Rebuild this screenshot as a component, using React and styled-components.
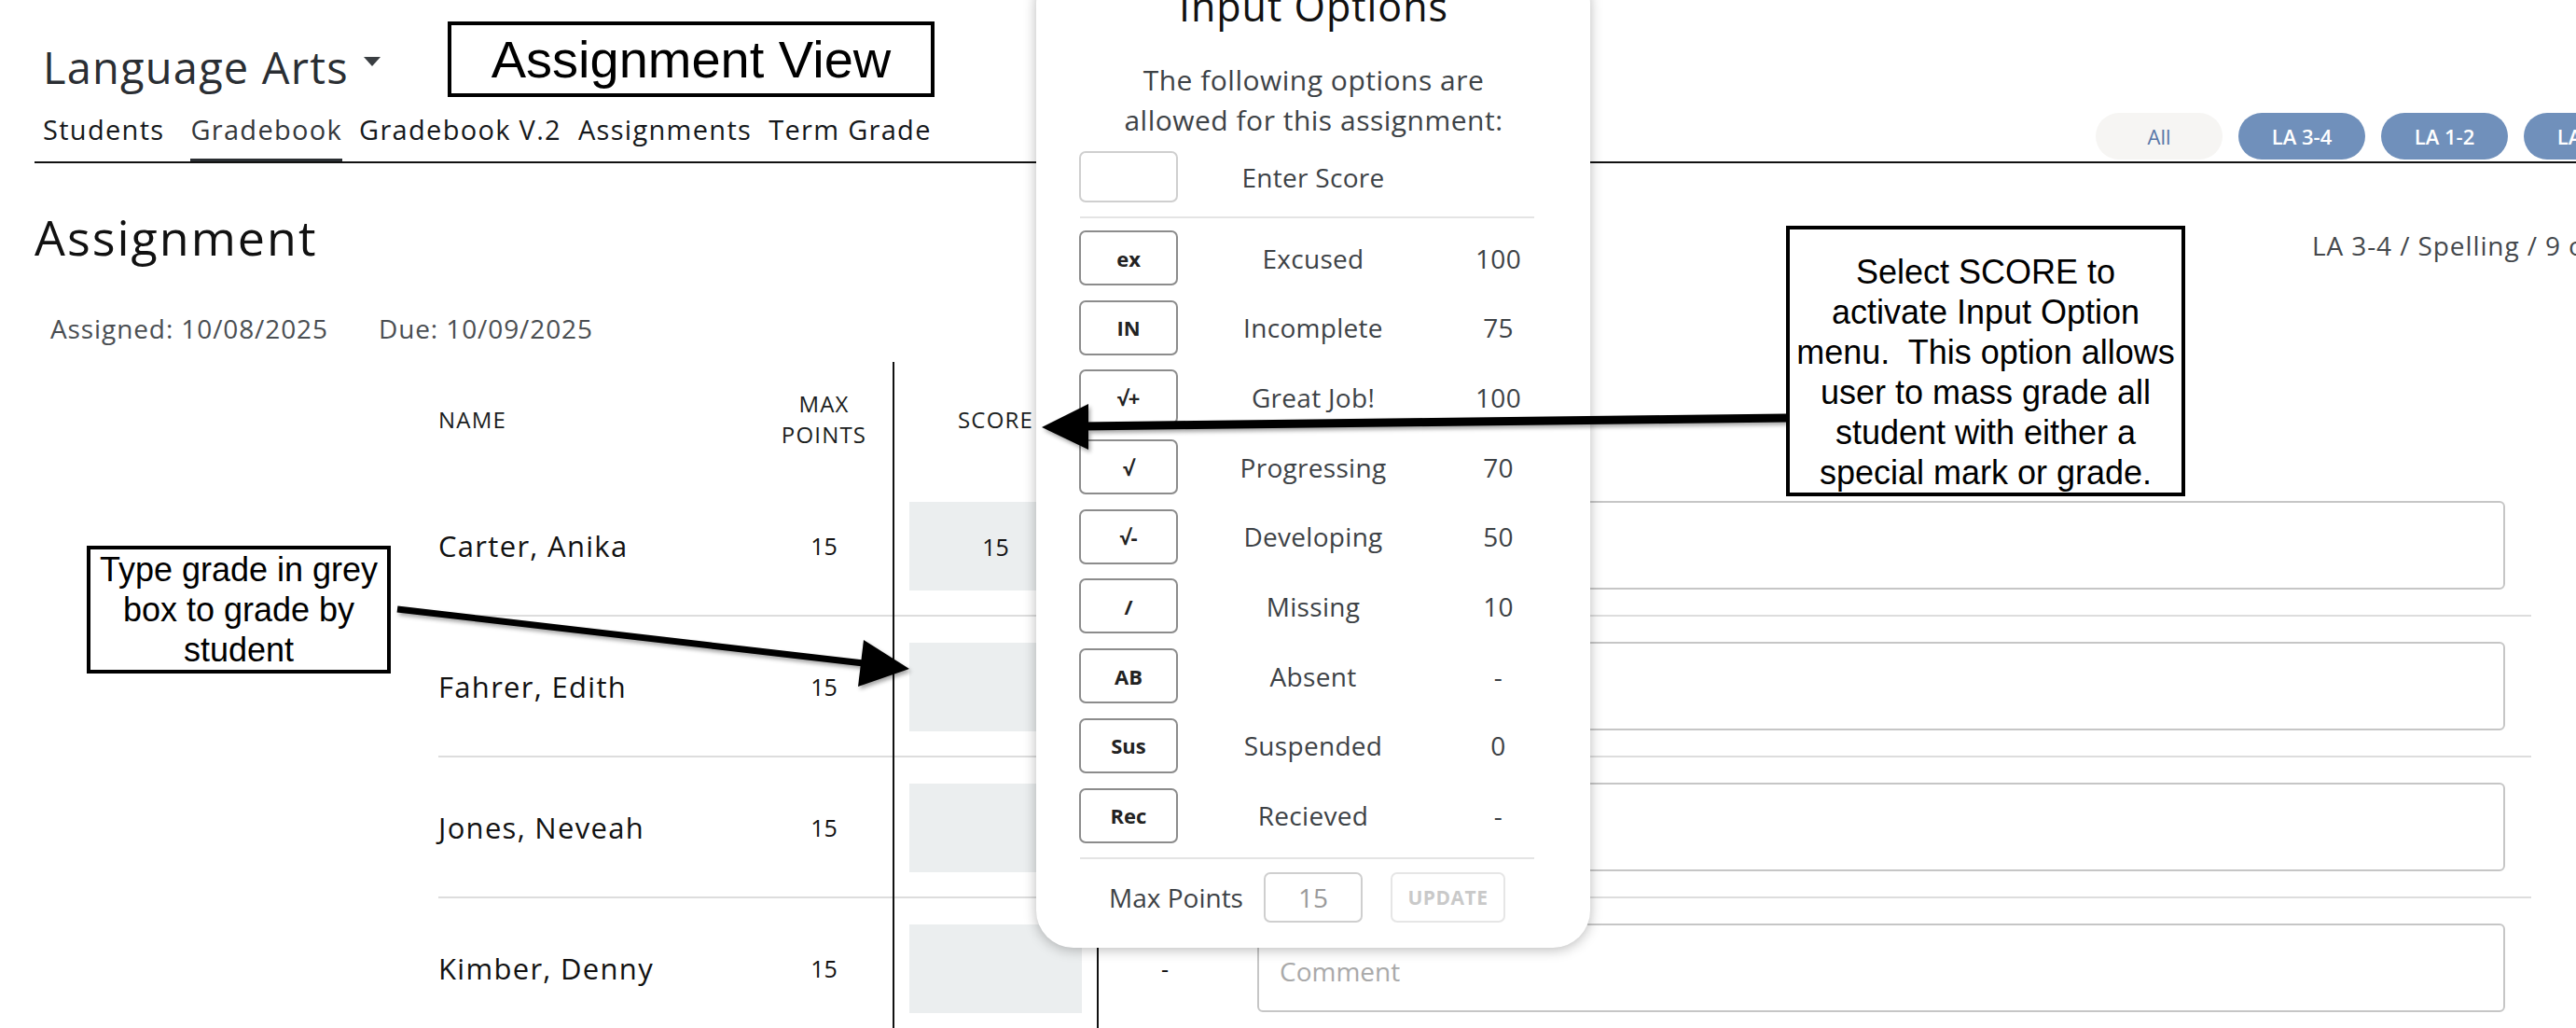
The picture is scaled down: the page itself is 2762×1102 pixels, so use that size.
import React from "react";
import styled, { createGlobalStyle } from "styled-components";

const GlobalStyle = createGlobalStyle`
  html, body {
    margin: 0;
    padding: 0;
    background: #fff;
  }
  body {
    font-family: "Open Sans", "Noto Sans", sans-serif;
    color: #1d2125;
  }
  * {
    box-sizing: border-box;
  }
`;

const Viewport = styled.div`
  position: relative;
  width: 2762px;
  height: 1102px;
  overflow: hidden;
  background: #fff;
`;

const Page = styled.div`
  width: 2880px;
  padding: 0 38px 0 37px;
`;

const Header = styled.div`
  display: flex;
  align-items: center;
  padding: 44px 0 0 9px;
`;

const CourseTitle = styled.div`
  display: flex;
  align-items: center;
  gap: 16px;
  font-size: 47px;
  line-height: 1.2;
  letter-spacing: 1.2px;
  color: #2a2e33;
`;

const Caret = styled.span`
  width: 0;
  height: 0;
  border-left: 9px solid transparent;
  border-right: 9px solid transparent;
  border-top: 10px solid #3a3e42;
  margin-top: -12px;
`;

const Nav = styled.div`
  display: flex;
  align-items: flex-end;
  justify-content: space-between;
  margin-top: 21px;
  padding-left: 9px;
  border-bottom: 2px solid #111;
`;

const Tabs = styled.div`
  display: flex;
  gap: 18px;
`;

const Tab = styled.div`
  font-size: 29px;
  line-height: 1.2;
  letter-spacing: 1.3px;
  padding-bottom: 14px;
  border-bottom: 3px solid ${(p) => (p.$active ? "#2b2f33" : "transparent")};
  color: ${(p) => (p.$active ? "#34383c" : "#15181b")};
  &:first-child {
    margin-right: 10px;
  }
`;

const Pills = styled.div`
  display: flex;
  gap: 17px;
  margin-bottom: 2px;
`;

const Pill = styled.div`
  width: 136px;
  height: 50px;
  border-radius: 25px;
  display: flex;
  align-items: center;
  justify-content: center;
  font-size: 22px;
  font-weight: ${(p) => (p.$light ? 400 : 600)};
  background: ${(p) => (p.$light ? "#f6f5f3" : "#7090bb")};
  color: ${(p) => (p.$light ? "#5877a8" : "#fff")};
`;

const TitleRow = styled.div`
  display: flex;
  align-items: baseline;
  justify-content: space-between;
  margin-top: 48px;
`;

const Heading = styled.h1`
  margin: 0;
  font-size: 52px;
  font-weight: 400;
  line-height: 1.2;
  letter-spacing: 2px;
  color: #111;
`;

const Breadcrumb = styled.div`
  width: 363px;
  white-space: nowrap;
  font-size: 28px;
  letter-spacing: 0.9px;
  color: #44484c;
`;

const Dates = styled.div`
  display: flex;
  gap: 54px;
  margin-top: 50px;
  padding-left: 17px;
  font-size: 28px;
  line-height: 1.2;
  letter-spacing: 0.9px;
  color: #4a4e52;
`;

const Table = styled.div`
  margin: 19px 0 0 433px;
  width: 2244px;
`;

const Row = styled.div`
  display: grid;
  grid-template-columns: 340px 147px 221px 142px 1fr;
  height: ${(p) => (p.$head ? "122px" : "151px")};
  border-bottom: ${(p) => (p.$head ? "none" : "2px solid #dddddd")};
`;

const Cell = styled.div`
  display: flex;
  align-items: center;
  justify-content: ${(p) => (p.$left ? "flex-start" : "center")};
  text-align: center;
`;

const HeadLabel = styled.div`
  font-size: 24px;
  line-height: 33px;
  letter-spacing: 1.2px;
  color: #1a1d20;
  text-transform: uppercase;
`;

const ScoreCell = styled(Cell)`
  border-left: 2px solid #111;
  border-right: 2px solid #111;
  padding: 0 16px;
  margin-bottom: ${(p) => (p.$head ? "0" : "-2px")};
`;

const ScoreBox = styled.div`
  width: 100%;
  height: 95px;
  background: #ebeeef;
  display: flex;
  align-items: center;
  justify-content: center;
  font-size: 25px;
  color: #111;
`;

const Name = styled.div`
  font-size: 31px;
  letter-spacing: 1.3px;
  color: #111;
`;

const Points = styled.div`
  font-size: 25px;
  color: #111;
`;

const CommentCell = styled(Cell)`
  padding: 0 28px;
`;

const CommentBox = styled.div`
  width: 100%;
  height: 95px;
  border: 2px solid #c6c6c6;
  border-radius: 6px;
  display: flex;
  align-items: center;
  padding: 6px 0 0 22px;
  font-size: 28px;
  color: #a9a9a9;
`;

/* input options popover */
const Popover = styled.div`
  position: absolute;
  left: 1111px;
  top: -36px;
  width: 594px;
  padding: 18px 45px 27px 46px;
  background: #fff;
  border-radius: 40px;
  box-shadow: 0 2px 14px rgba(0, 0, 0, 0.28);
  z-index: 2;
`;

const PopTitle = styled.div`
  font-size: 43px;
  line-height: 50px;
  letter-spacing: 1px;
  text-align: center;
  color: #111;
`;

const PopText = styled.div`
  margin-top: 32px;
  font-size: 30px;
  line-height: 43px;
  letter-spacing: 0.5px;
  text-align: center;
  color: #3d4246;
`;

const OptionRow = styled.div`
  display: grid;
  grid-template-columns: 106px 290px 107px;
  align-items: center;
  height: ${(p) => (p.$entry ? "55px" : "59px")};
  margin-top: ${(p) => (p.$entry ? "12px" : "0")};
`;

const CodeBox = styled.div`
  height: 100%;
  border: 2px solid ${(p) => (p.$entry ? "#cfcfcf" : "#8c8c8c")};
  border-radius: 7px;
  display: flex;
  align-items: center;
  justify-content: center;
  font-size: 22px;
  font-weight: 700;
  color: #222;
`;

const OptText = styled.div`
  text-align: center;
  font-size: 28px;
  letter-spacing: 0.3px;
  color: #3d4246;
`;

const Divider = styled.div`
  width: 487px;
  height: 2px;
  background: #e4e4e4;
  margin: ${(p) => p.$margin};
`;

const OptionList = styled.div`
  display: flex;
  flex-direction: column;
  gap: 15.7px;
`;

const MaxRow = styled.div`
  display: flex;
  align-items: center;
  justify-content: center;
  height: 54px;
  padding-right: 14px;
`;

const MaxLabel = styled.div`
  font-size: 28px;
  color: #3d4246;
  margin-right: 22px;
`;

const MaxInput = styled.div`
  width: 106px;
  height: 54px;
  border: 2px solid #cfcfcf;
  border-radius: 7px;
  display: flex;
  align-items: center;
  justify-content: center;
  font-size: 28px;
  color: #9a9a9a;
  margin-right: 30px;
`;

const UpdateButton = styled.div`
  width: 123px;
  height: 54px;
  border: 2px solid #e6e6e6;
  border-radius: 7px;
  display: flex;
  align-items: center;
  justify-content: center;
  font-size: 21px;
  font-weight: 700;
  letter-spacing: 0.5px;
  color: #c9c9c9;
`;

/* annotation callouts */
const Callout = styled.div`
  position: absolute;
  left: ${(p) => p.$left}px;
  top: ${(p) => p.$top}px;
  width: ${(p) => p.$width}px;
  padding-top: ${(p) => p.$padTop || 0}px;
  background: #fff;
  border: 4px solid #000;
  font-family: "Liberation Sans", Arial, sans-serif;
  font-size: 36px;
  line-height: 43px;
  text-align: center;
  color: #000;
  z-index: 4;
`;

const TitleCallout = styled(Callout)`
  height: 81px;
  display: flex;
  align-items: center;
  justify-content: center;
  font-size: 56px;
  line-height: 1;
`;

const ArrowLayer = styled.svg`
  position: absolute;
  left: 0;
  top: 0;
  pointer-events: none;
  z-index: 3;
`;

const tabs = ["Students", "Gradebook", "Gradebook V.2", "Assignments", "Term Grade"];
const students = ["Carter, Anika", "Fahrer, Edith", "Jones, Neveah", "Kimber, Denny"];
const options = [
  ["ex", "Excused", "100"],
  ["IN", "Incomplete", "75"],
  ["√+", "Great Job!", "100"],
  ["√", "Progressing", "70"],
  ["√-", "Developing", "50"],
  ["/", "Missing", "10"],
  ["AB", "Absent", "-"],
  ["Sus", "Suspended", "0"],
  ["Rec", "Recieved", "-"],
];

const App = () => {
  return (
    <Viewport>
      <GlobalStyle />
      <Page>
        <Header>
          <CourseTitle>
            Language Arts <Caret />
          </CourseTitle>
        </Header>
        <Nav>
          <Tabs>
            {tabs.map((t) => (
              <Tab key={t} $active={t === "Gradebook"}>
                {t}
              </Tab>
            ))}
          </Tabs>
          <Pills>
            <Pill $light>All</Pill>
            <Pill>LA 3-4</Pill>
            <Pill>LA 1-2</Pill>
            <Pill>LA 5-6</Pill>
          </Pills>
        </Nav>
        <TitleRow>
          <Heading>Assignment</Heading>
          <Breadcrumb>LA 3-4 / Spelling / 9 of 15</Breadcrumb>
        </TitleRow>
        <Dates>
          <span>Assigned: 10/08/2025</span>
          <span>Due: 10/09/2025</span>
        </Dates>
        <Table>
          <Row $head>
            <Cell $left>
              <HeadLabel>Name</HeadLabel>
            </Cell>
            <Cell>
              <HeadLabel>
                Max
                <br />
                Points
              </HeadLabel>
            </Cell>
            <ScoreCell $head>
              <HeadLabel>Score</HeadLabel>
            </ScoreCell>
            <Cell />
            <Cell />
          </Row>
          {students.map((s, i) => (
            <Row key={s}>
              <Cell $left>
                <Name>{s}</Name>
              </Cell>
              <Cell>
                <Points>15</Points>
              </Cell>
              <ScoreCell>
                <ScoreBox>{i === 0 ? "15" : ""}</ScoreBox>
              </ScoreCell>
              <Cell>
                <Points>-</Points>
              </Cell>
              <CommentCell>
                {/* rows under the popover keep an empty box */}
                <CommentBox>{i === students.length - 1 ? "Comment" : ""}</CommentBox>
              </CommentCell>
            </Row>
          ))}
        </Table>
      </Page>

      <Popover>
        <PopTitle>Input Options</PopTitle>
        <PopText>
          The following options are
          <br />
          allowed for this assignment:
        </PopText>
        <OptionRow $entry>
          <CodeBox $entry />
          <OptText>Enter Score</OptText>
          <span />
        </OptionRow>
        <Divider $margin="15px 0 13px 1px" />
        <OptionList>
          {options.map(([code, label, value]) => (
            <OptionRow key={label}>
              <CodeBox>{code}</CodeBox>
              <OptText>{label}</OptText>
              <OptText>{value}</OptText>
            </OptionRow>
          ))}
        </OptionList>
        <Divider $margin="15px 0 14px 1px" />
        <MaxRow>
          <MaxLabel>Max Points</MaxLabel>
          <MaxInput>15</MaxInput>
          <UpdateButton>UPDATE</UpdateButton>
        </MaxRow>
      </Popover>

      <ArrowLayer width="2762" height="1102" viewBox="0 0 2762 1102">
        <defs>
          <filter id="arrowShadow" x="-5%" y="-50%" width="110%" height="200%">
            <feDropShadow dx="2" dy="3" stdDeviation="2" floodColor="#000" floodOpacity="0.35" />
          </filter>
        </defs>
        <g filter="url(#arrowShadow)" fill="#000" stroke="#000">
          <line x1="426" y1="653" x2="926" y2="711" strokeWidth="7" />
          <polygon points="975,717 920,736 926,686" stroke="none" />
          <line x1="1916" y1="448" x2="1160" y2="457" strokeWidth="9" />
          <polygon points="1117,458 1167,433 1167,482" stroke="none" />
        </g>
      </ArrowLayer>

      <TitleCallout $left={480} $top={23} $width={522}>
        Assignment View
      </TitleCallout>
      <Callout $left={93} $top={585} $width={326}>
        Type grade in grey
        <br />
        box to grade by
        <br />
        student
      </Callout>
      <Callout $left={1915} $top={242} $width={428} $padTop={24}>
        Select SCORE to
        <br />
        activate Input Option
        <br />
        menu.{"\u00a0 "}This option allows
        <br />
        user to mass grade all
        <br />
        student with either a
        <br />
        special mark or grade.
      </Callout>
    </Viewport>
  );
};

export default App;
